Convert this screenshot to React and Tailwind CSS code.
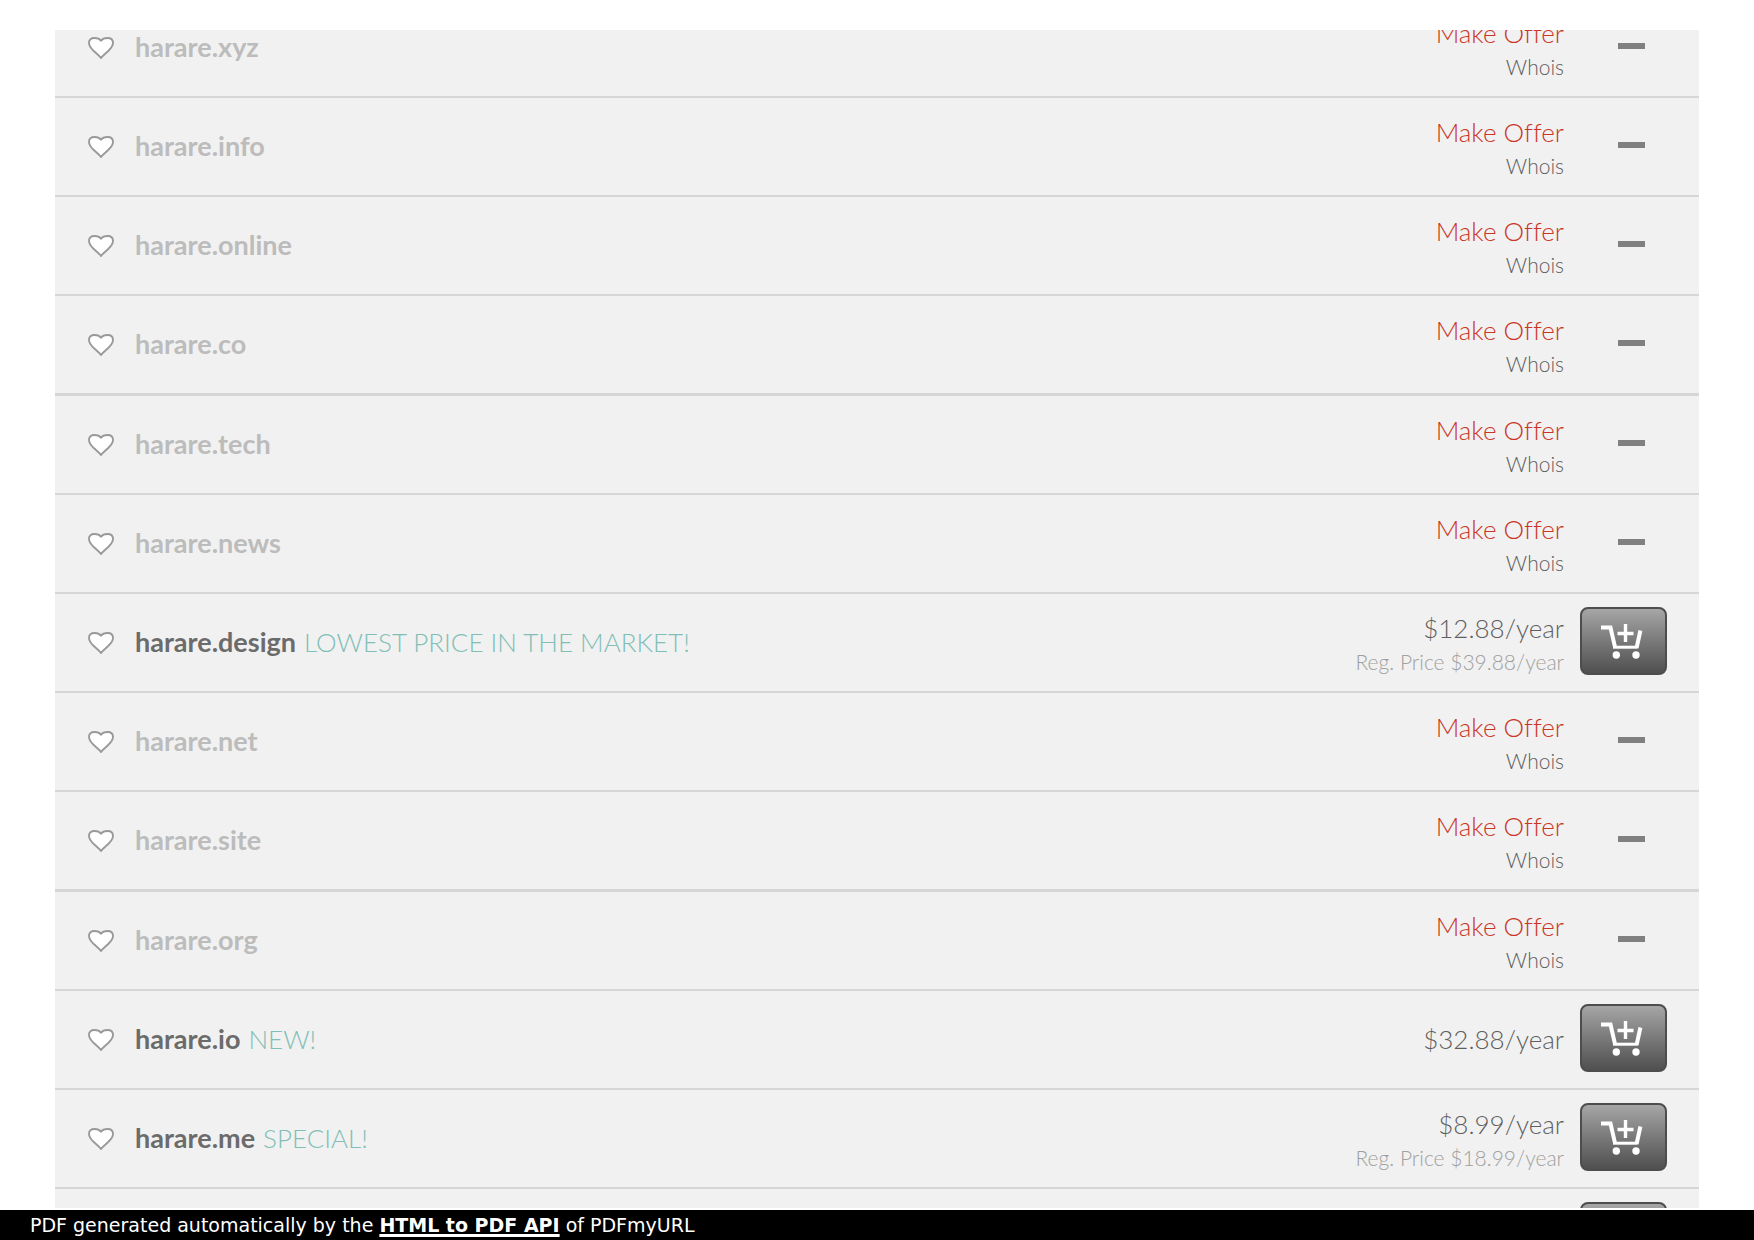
import React from "react";

const rows = [
  { name: "harare.xyz" },
  { name: "harare.info" },
  { name: "harare.online" },
  { name: "harare.co", thick: true },
  { name: "harare.tech" },
  { name: "harare.news" },
  { name: "harare.design", note: "LOWEST PRICE IN THE MARKET!", price: "$12.88/year", reg: "Reg. Price $39.88/year" },
  { name: "harare.net" },
  { name: "harare.site", thick: true },
  { name: "harare.org" },
  { name: "harare.io", note: "NEW!", price: "$32.88/year" },
  { name: "harare.me", note: "SPECIAL!", price: "$8.99/year", reg: "Reg. Price $18.99/year" },
  { name: "", price: " " },
];

function Heart() {
  return (
    <svg className="block h-6 w-7" viewBox="0 0 28 24" aria-hidden="true">
      <path
        d="M14 22 C12.5 19.5 9.5 17.5 7 15.2 C3.8 12.3 2 10.3 2 6.8 C2 3.6 4.2 2 7.5 2 C10.8 2 12.6 2.8 14 4.8 C15.4 2.8 17.2 2 20.5 2 C23.8 2 26 3.6 26 6.8 C26 10.3 24.2 12.3 21 15.2 C18.5 17.5 15.5 19.5 14 22 Z"
        fill="#ffffff"
        stroke="#999999"
        strokeWidth="1.9"
        strokeLinejoin="round"
      />
    </svg>
  );
}

function CartPlus() {
  return (
    <svg className="block h-9 w-11" viewBox="0 0 44 36" fill="none" stroke="#ffffff" aria-hidden="true">
      <path d="M1 4.5 H10.5 L15 24" strokeWidth="4" strokeLinejoin="miter" />
      <path d="M13 24.2 H37.5" strokeWidth="3" />
      <path d="M36.6 25 L40.4 7.5" strokeWidth="4" />
      <path d="M25.5 1 V19 M17.5 10.5 H33.5" strokeWidth="3.4" />
      <circle cx="16.3" cy="32" r="3.7" fill="#ffffff" stroke="none" />
      <circle cx="36" cy="32" r="3.7" fill="#ffffff" stroke="none" />
    </svg>
  );
}

function DomainRow({ row }) {
  const available = Boolean(row.price);
  const twoLines = !available || Boolean(row.reg);
  return (
    <li
      className={
        "flex shrink-0 items-center border-[#d6d6d6] pr-8 pl-8 " +
        (row.thick ? "border-b-3" : "border-b-2")
      }
    >
      <button type="button" aria-label={"Add " + row.name + " to favorites"} className="mr-5">
        <Heart />
      </button>
      <div className="flex h-[97px] flex-1 items-center gap-2 pb-0.5 leading-8">
        <span className={"text-[27px] font-bold " + (available ? "text-[#6b6b6b]" : "text-[#bcbcbc]")}>{row.name}</span>
        {row.note && <span className="text-[26px] font-light text-[#80bfb6]">{row.note}</span>}
      </div>
      <div
        className={
          "flex flex-col items-end leading-[34px] font-light [font-variant-ligatures:none] " +
          (twoLines ? "pt-1" : "pb-0.5")
        }
      >
        {available ? (
          <>
            <span className="text-[26px] text-[#5f5f5f]">{row.price}</span>
            {row.reg && <span className="text-[21px] text-[#a0a0a0]">{row.reg}</span>}
          </>
        ) : (
          <>
            <a href="#offer" className="text-[26px] text-[#cb3525]">Make Offer</a>
            <a href="#whois" className="text-[21px] text-[#5f5f5f]">Whois</a>
          </>
        )}
      </div>
      <div className="ml-4 flex w-[87px] justify-end">
        {available ? (
          <button
            type="button"
            aria-label={"Add " + row.name + " to cart"}
            className="mb-1 flex h-[68px] w-full items-center justify-center rounded-lg border-2 border-[#4d4d4d] bg-linear-to-b from-[#a6a6a6] to-[#505050] pr-1"
          >
            <CartPlus />
          </button>
        ) : (
          <span className="mr-[22px] mb-1 h-1.5 w-[27px] bg-[#808080]" />
        )}
      </div>
    </li>
  );
}

export default function App() {
  return (
    <div className="flex h-screen flex-col overflow-hidden bg-white font-['Lato',sans-serif]">
      <main className="mx-[55px] mt-[30px] mb-0.5 min-h-0 flex-1 overflow-hidden bg-[#f1f1f1]">
        <ul className="-mt-[31px] flex flex-col">
          {rows.map((row) => (
            <DomainRow key={row.name} row={row} />
          ))}
        </ul>
      </main>
      <footer className="flex h-[30px] shrink-0 items-center bg-black px-[30px] font-['DejaVu_Sans',sans-serif] text-[19px] leading-7 text-white">
        <p>
          PDF generated automatically by the{" "}
          <a href="#api" className="font-bold underline decoration-3">HTML to PDF API</a> of PDFmyURL
        </p>
      </footer>
    </div>
  );
}
